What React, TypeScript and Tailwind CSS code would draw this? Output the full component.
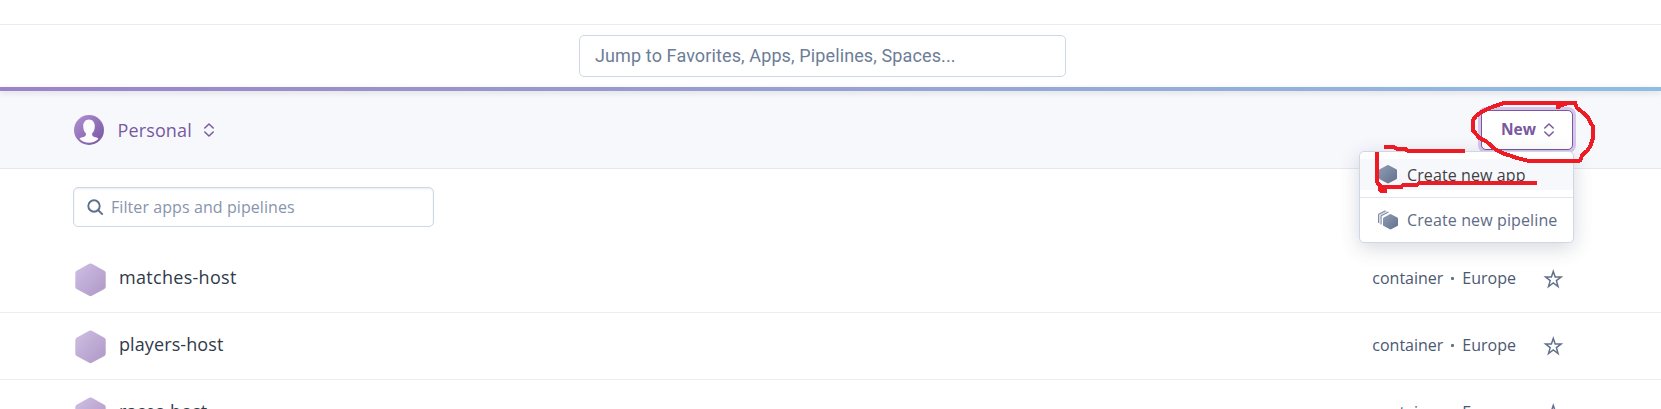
const apps = [
  { name: 'matches-host', spacing: 'tracking-[0.3px]' },
  { name: 'players-host', spacing: 'tracking-[0.1px]' },
  { name: 'races-host', spacing: 'tracking-[0.1px]' },
];

function Chevrons({ className }: { className: string }) {
  return (
    <svg className={className} width="10" height="14" viewBox="0 0 10 14" fill="none" stroke="currentColor" strokeWidth="1.5" strokeLinecap="round" strokeLinejoin="round">
      <path d="M.8 5 5 1 9.2 5M.8 9 5 13 9.2 9" />
    </svg>
  );
}

function Avatar() {
  return (
    <svg width="30" height="30" viewBox="0 0 30 30">
      <defs>
        <linearGradient id="avatar" x1="0" y1="0" x2="1" y2="1">
          <stop offset="0" stopColor="#b292d3" />
          <stop offset="1" stopColor="#7452a2" />
        </linearGradient>
      </defs>
      <circle cx="15" cy="15" r="15" fill="url(#avatar)" />
      <path
        fill="#fcfcfe"
        d="M15 4.500C11.400 4.500 9.200 7.300 9.200 11.300C9.200 14.500 10.300 17 12 18.600C12 20.600 11.300 21.500 9.500 22C7.900 22.300 6.600 22.700 5.500 23.700C8 26.300 11.300 27.700 15 27.700S22 26.300 24.500 23.700C23.400 22.700 22.100 22.300 20.500 22C18.700 21.500 18 20.600 18 18.600C19.700 17 20.800 14.500 20.800 11.300C20.800 7.300 18.600 4.500 15 4.500Z"
      />
    </svg>
  );
}

function AppHexagon() {
  return (
    <svg className="shrink-0" width="31" height="34" viewBox="0 0 31 34">
      <defs>
        <linearGradient id="app" x1="0" y1="0" x2="1" y2="1">
          <stop offset="0" stopColor="#cfbfe4" />
          <stop offset="1" stopColor="#ae97c5" />
        </linearGradient>
      </defs>
      <path
        fill="url(#app)"
        d="M14.200.8Q15.500.1 16.800.8L29.400 7.800Q30.700 8.600 30.700 10V23.700Q30.700 25.100 29.400 25.900L16.800 32.800Q15.500 33.500 14.200 32.800L1.600 25.900Q.3 25.100.3 23.700V10Q.3 8.600 1.600 7.800Z"
      />
    </svg>
  );
}

function SlateGradient({ id }: { id: string }) {
  return (
    <defs>
      <linearGradient id={id} x1="0" y1="0" x2="1" y2="1">
        <stop offset="0" stopColor="#909db3" />
        <stop offset="1" stopColor="#62708c" />
      </linearGradient>
    </defs>
  );
}

function NewAppIcon() {
  return (
    <svg width="20" height="20" viewBox="0 0 20 20">
      <SlateGradient id="new-app" />
      <path fill="url(#new-app)" d="M9.300 1.200Q10 .8 10.700 1.200L18.300 5.300Q19 5.700 19 6.500V14Q19 14.800 18.300 15.200L10.700 19.200Q10 19.600 9.300 19.200L1.700 15.200Q1 14.800 1 14V6.500Q1 5.700 1.700 5.300Z" />
    </svg>
  );
}

function NewPipelineIcon() {
  return (
    <svg width="20" height="20" viewBox="0 0 20 20">
      <SlateGradient id="new-pipeline" />
      <path fill="url(#new-pipeline)" d="M11.900 4.200Q12.500 3.900 13.100 4.200L19.300 7.600Q20 8 20 8.700V14.900Q20 15.600 19.300 16L13.100 19.300Q12.500 19.600 11.900 19.300L5.700 16Q5 15.600 5 14.900V8.700Q5 8 5.700 7.600Z" />
      <path fill="none" stroke="#7d8aa3" strokeWidth="1.100" d="M.6 13V5Q.6 4.300 1.200 4L7.500.7M3.100 14.600V6.300Q3.100 5.700 3.600 5.400L10.500 1.900" />
      <path fill="none" stroke="#7d8aa3" strokeWidth=".8" d="M1.900 13.800V5.700Q1.900 5 2.400 4.700L9 1.300" opacity=".45" />
    </svg>
  );
}

function Star() {
  return (
    <svg width="20" height="20" viewBox="0 0 20 20" fill="none" stroke="#62718c" strokeWidth="1.500" strokeLinejoin="miter">
      <path d="M10.300 2.400 12.200 8H18L13.400 11.600 15.100 17.500 10.300 14 5.500 17.500 7.200 11.600 2.600 8H8.400Z" />
    </svg>
  );
}

function Markup() {
  return (
    <svg className="pointer-events-none absolute left-[1340px] top-[90px] z-20" width="280" height="160" viewBox="0 0 840 480" fill="none" stroke="#ed1c24" strokeWidth="12" strokeLinecap="square" strokeLinejoin="bevel" shapeRendering="crispEdges">
      <path d="M653 50V43M658 48 680 40H706L710 53 724 64 742 80 752 98 759 110V145L752 165 743 181 727 195 720 212H563L530 204 512 197 488 190 467 179 453 166 437 153 417 143 405 128 399 121V91L407 79 424 66 447 55 470 46 493 39H706" />
      <path d="M137 172H164L172 177H196L204 183H368" />
      <path d="M112 192V278L120 286V302H134M120 288 133 292H183L188 285H230L238 279H585" />
    </svg>
  );
}

export default function App() {
  return (
    <div className="relative flex h-[409px] w-full flex-col overflow-hidden bg-white font-['Open_Sans','Noto_Sans',sans-serif] text-base whitespace-nowrap">
      <div className="h-[25px] shrink-0 border-b border-[#ebebf5]" />
      <div className="flex h-[62px] shrink-0 justify-center pt-[10px] pr-[16px]">
        <div className="flex h-[42px] w-[487px] items-center rounded-[5px] border border-[#cfd7e6] pb-[2px] pl-[15px] font-['Roboto',sans-serif] text-[18px] tracking-[0.12px] text-[#6c7d97]">
          Jump to Favorites, Apps, Pipelines, Spaces...
        </div>
      </div>
      <div className="relative z-[1] h-1 shrink-0 bg-linear-to-r from-[#9b84c6] to-[#8fbde3] shadow-[0_2px_6px_rgba(0,0,0,0.12)]" />

      <header className="flex h-[78px] shrink-0 items-center justify-between border-b border-[#e3e7ef] bg-[#f7f8fc] pr-[88px] pl-[74px]">
        <button className="flex items-center text-[#79589f]">
          <Avatar />
          <span className="ml-[13.500px] pt-[2px] text-[18px] tracking-[0.13px]">Personal</span>
          <Chevrons className="ml-3" />
        </button>
        <div className="relative">
          <button className="flex h-10 w-[92px] items-center rounded-[5px] border border-[#79589f] bg-white pl-[19px] text-[#79589f] shadow-[0_0_0_3px_#d5c5ea]">
            <span className="w-[35px] text-[15.5px] font-bold">New</span>
            <Chevrons className="ml-[8px]" />
          </button>
          <div className="absolute top-[41px] right-[-1px] z-10 h-[92px] w-[215px] rounded-[5px] border border-[#cfd7e6] bg-white pt-[7px] text-[#5d6b87] shadow-[0_5px_20px_rgba(50,60,85,0.2)]">
            <div className="flex h-[31px] items-center gap-[9px] bg-[#f7f8fc] pl-[18px] text-[#3f3f44]">
              <NewAppIcon />
              <span className="pt-[2px] tracking-[0.1px]">Create new app</span>
            </div>
            <div className="mt-[7px] h-px bg-[#dfe4ee]" />
            <div className="mt-[7px] flex h-[31px] items-center gap-[9px] pl-[18px]">
              <NewPipelineIcon />
              <span className="tracking-[0.12px]">Create new pipeline</span>
            </div>
          </div>
        </div>
      </header>

      <div className="h-[77px] shrink-0 pt-[18px] pl-[73px]">
        <div className="flex h-10 w-[361px] items-center rounded-[5px] border border-[#cfd7e6] pl-[13px] text-[#8795ad] shadow-[inset_0_1px_2px_rgba(90,110,150,0.14)]">
          <svg width="17" height="17" viewBox="0 0 17 17" fill="none" stroke="#5b6f8e" strokeWidth="1.900">
            <circle cx="7" cy="7" r="5.700" />
            <path d="m11 11 4.700 4.700" />
          </svg>
          <span className="ml-[7px] tracking-[0.08px]">Filter apps and pipelines</span>
        </div>
      </div>

      <main>
        {apps.map((app) => (
          <div key={app.name} className="flex h-[67px] items-center justify-between border-b border-[#ecedf3] pr-[98px] pl-[75px]">
            <div className="flex items-center pt-px">
              <AppHexagon />
              <span className={`ml-[13px] pb-[5px] text-[18px] text-[#303a49] ${app.spacing}`}>{app.name}</span>
            </div>
            <div className="flex items-center">
              <div className="flex items-center pb-[2px] text-[#4b5872]">
                <span>container</span>
                <span className="mx-[8px] size-[3px] rounded-[1px] bg-[#62718c]" />
                <span>Europe</span>
              </div>
              <span className="ml-[27px]"><Star /></span>
            </div>
          </div>
        ))}
      </main>
      <Markup />
    </div>
  );
}
